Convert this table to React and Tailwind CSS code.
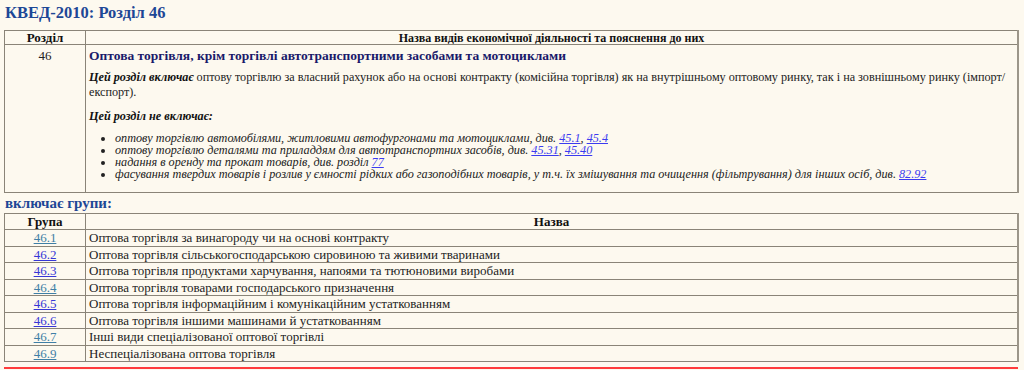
import React from "react";

const groups = [
  { code: "46.1", name: "Оптова торгівля за винагороду чи на основі контракту", visited: true },
  { code: "46.2", name: "Оптова торгівля сільськогосподарською сировиною та живими тваринами" },
  { code: "46.3", name: "Оптова торгівля продуктами харчування, напоями та тютюновими виробами" },
  { code: "46.4", name: "Оптова торгівля товарами господарського призначення", visited: true },
  { code: "46.5", name: "Оптова торгівля інформаційним і комунікаційним устаткованням" },
  { code: "46.6", name: "Оптова торгівля іншими машинами й устаткованням" },
  { code: "46.7", name: "Інші види спеціалізованої оптової торгівлі", visited: true },
  { code: "46.9", name: "Неспеціалізована оптова торгівля", visited: true },
];

const cell = "border border-[#8a8478]";

function Ref({ children }) {
  return <a href="#" className="text-[#3b3bf0] underline">{children}</a>;
}

export default function App() {
  return (
    <div className="min-h-[370px] bg-[#fdf9ef] px-[4px] pt-[2px] text-[13px] text-[#222] font-['Liberation_Serif',serif]">
      {/* Title */}
      <h1 className="text-[16.5px] font-bold leading-[22px] text-[#1d4796] pl-[1px]">КВЕД-2010: Розділ 46</h1>

      <table className="mt-[6px] w-[1015px] border-collapse border-r-2 border-r-[#9c968a]">
        <thead>
          <tr>
            <th className={`${cell} w-[81px] h-[14px] leading-[12px] font-bold text-[#111]`}>Розділ</th>
            <th className={`${cell} leading-[12px] text-[12px] font-bold text-[#111]`}>Назва видів економічної діяльності та пояснення до них</th>
          </tr>
        </thead>
        <tbody>
          <tr>
            <td className={`${cell} align-top text-center pt-[3px] leading-[15px]`}>46</td>
            <td className={`${cell} align-top px-[3px] pt-[3px] pb-[12px]`}>
              <div className="text-[13.5px] leading-[15px] font-bold text-[#1a1a6a]">Оптова торгівля, крім торгівлі автотранспортними засобами та мотоциклами</div>
              <p className="mt-[7px] text-[12.2px] leading-[15px]">
                <b><i className="text-[#111]">Цей розділ включає</i></b> оптову торгівлю за власний рахунок або на основі контракту (комісійна торгівля) як на внутрішньому оптовому ринку, так і на зовнішньому ринку (імпорт/ експорт).
              </p>
              <p className="mt-[9px] text-[12.2px] leading-[15px] font-bold italic text-[#111]">Цей розділ не включає:</p>
              <ul className="mt-[8px] pl-[26px] list-disc italic text-[12.2px] leading-[12px]">
                <li>оптову торгівлю автомобілями, житловими автофургонами та мотоциклами, див. <Ref>45.1</Ref>, <Ref>45.4</Ref></li>
                <li>оптову торгівлю деталями та приладдям для автотранспортних засобів, див. <Ref>45.31</Ref>, <Ref>45.40</Ref></li>
                <li>надання в оренду та прокат товарів, див. розділ <Ref>77</Ref></li>
                <li>фасування твердих товарів і розлив у ємності рідких або газоподібних товарів, у т.ч. їх змішування та очищення (фільтрування) для інших осіб, див. <Ref>82.92</Ref></li>
              </ul>
            </td>
          </tr>
        </tbody>
      </table>

      <h2 className="text-[15px] font-bold leading-[20px] text-[#1d4796] pl-[1px]">включає групи:</h2>

      <table className="w-[1015px] border-collapse border-r-2 border-r-[#9c968a] leading-[15px]">
        <thead>
          <tr>
            <th className={`${cell} w-[81px] h-[16px] font-bold text-[#111]`}>Група</th>
            <th className={`${cell} font-bold text-[#111]`}>Назва</th>
          </tr>
        </thead>
        <tbody>
          {groups.map((g) => (
            <tr key={g.code} className="h-[16.5px]">
              <td className={`${cell} text-center`}>
                <a href="#" className={g.visited ? "text-[#3f7fa6] underline" : "text-[#3636d6] underline"}>{g.code}</a>
              </td>
              <td className={`${cell} px-[3px]`}>{g.name}</td>
            </tr>
          ))}
        </tbody>
      </table>

      <div className="mt-[5px] w-[1014px] h-[2px] bg-[#ff3b3b]" />
    </div>
  );
}
